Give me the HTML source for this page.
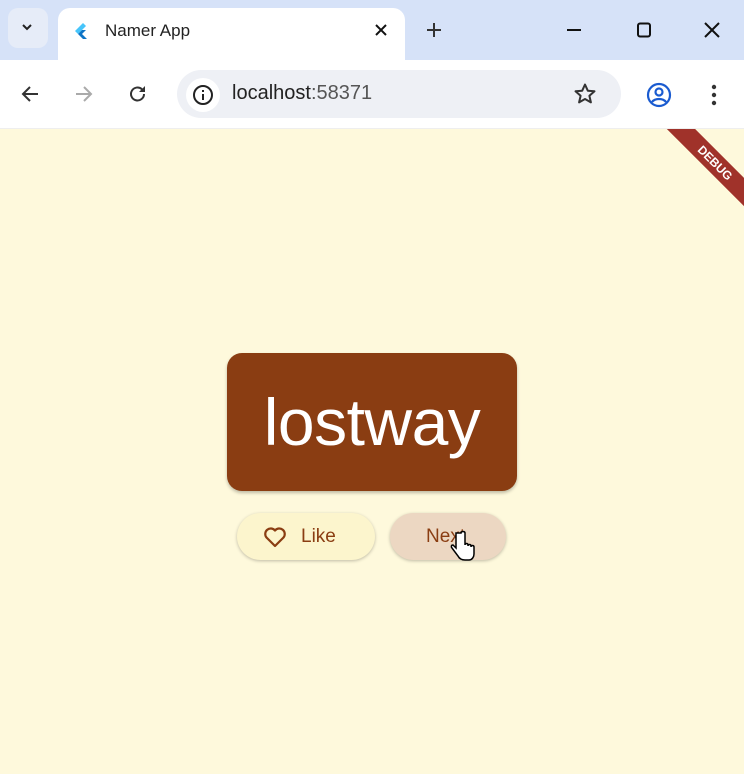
<!DOCTYPE html>
<html><head><meta charset="utf-8"><style>
*{margin:0;padding:0;box-sizing:border-box}
body{width:744px;height:774px;overflow:hidden;font-family:"Liberation Sans",sans-serif;background:#fef9dc;position:relative}
.tabbar{position:absolute;left:0;top:0;width:744px;height:60px;background:#d6e2f8}
.tab{position:absolute;left:58px;top:8px;width:347px;height:52px;background:#fff;border-radius:12px 12px 0 0}
.tb{position:absolute;left:0;top:60px;width:744px;height:69px;background:#fff;border-bottom:1px solid #eee}
.omni{position:absolute;left:177px;top:70px;width:444px;height:48px;background:#eef0f5;border-radius:24px}
.card{position:absolute;left:227px;top:353px;width:290px;height:138px;background:#8a3d12;border-radius:15px;box-shadow:0 2px 3px rgba(0,0,0,.25);color:#fff;font-size:66px;text-align:center;line-height:138px;letter-spacing:-0.5px}
.btn{position:absolute;top:513px;height:47px;border-radius:24px;color:#8a3d12;font-size:19px;line-height:47px;box-shadow:0 1px 3px rgba(0,0,0,.25)}
.clip{position:absolute;left:0;top:129px;width:744px;height:645px;overflow:hidden}
</style></head><body>
<div class="tabbar">
<div style="position:absolute;left:8px;top:8px;width:40px;height:40px;border-radius:10px;background:#e6ecf8"></div>
<svg style="position:absolute;left:20px;top:22px" width="14" height="10"><path d="M3 3l4 4 4-4" stroke="#222" stroke-width="2" fill="none"/></svg>
<div class="tab">
<svg style="position:absolute;left:15px;top:14px" width="16" height="20"><path d="M10 1L2 9l3 3 8-8z" fill="#47c5fb"/><path d="M5 12l5 5h4l-5-5 4-4H9z" fill="#0e75c6"/></svg>
<div style="position:absolute;left:47px;top:13px;font-size:17px;color:#222">Namer App</div>
<svg style="position:absolute;left:316px;top:15px" width="14" height="14"><path d="M2 2l10 10M12 2L2 12" stroke="#111" stroke-width="2"/></svg>
</div>
<svg style="position:absolute;left:426px;top:22px" width="16" height="16"><path d="M8 1v14M1 8h14" stroke="#333" stroke-width="2"/></svg>
<svg style="position:absolute;left:566px;top:22px" width="16" height="16"><path d="M1 8h14" stroke="#111" stroke-width="2"/></svg>
<svg style="position:absolute;left:636px;top:22px" width="16" height="16"><rect x="2" y="1.5" width="12" height="13" rx="2" stroke="#111" stroke-width="2" fill="none"/></svg>
<svg style="position:absolute;left:704px;top:22px" width="16" height="16"><path d="M1 1l14 14M15 1L1 15" stroke="#111" stroke-width="2"/></svg>
</div>
<div class="tb"></div>
<svg style="position:absolute;left:20px;top:84px" width="20" height="20"><path d="M18 10H3M10 3l-7 7 7 7" stroke="#333" stroke-width="2" fill="none"/></svg>
<svg style="position:absolute;left:74px;top:84px" width="20" height="20"><path d="M2 10h15M10 3l7 7-7 7" stroke="#aaa" stroke-width="2" fill="none"/></svg>
<svg style="position:absolute;left:128px;top:84px" width="20" height="20"><path d="M16 10a6.5 6.5 0 1 1-2-4.7" stroke="#333" stroke-width="2" fill="none"/><path d="M17 2v6h-6z" fill="#333"/></svg>
<div class="omni"></div>
<div style="position:absolute;left:186px;top:78px;width:34px;height:34px;border-radius:17px;background:#fff"></div>
<svg style="position:absolute;left:192px;top:84px" width="22" height="22"><circle cx="11" cy="11" r="9" stroke="#222" stroke-width="2" fill="none"/><path d="M11 10v6M11 6v2" stroke="#222" stroke-width="2"/></svg>
<div style="position:absolute;left:232px;top:82px;font-size:20px;color:#222">localhost<span style="color:#555">:58371</span></div>
<svg style="position:absolute;left:573px;top:82px" width="24" height="24"><path d="M12 2.5l2.8 6.2 6.7.6-5.1 4.5 1.5 6.6L12 17l-5.9 3.4 1.5-6.6-5.1-4.5 6.7-.6z" stroke="#333" stroke-width="2" fill="none" stroke-linejoin="round"/></svg>
<svg style="position:absolute;left:646px;top:82px" width="26" height="26"><circle cx="13" cy="13" r="11" stroke="#1a5bd0" stroke-width="2.2" fill="none"/><circle cx="13" cy="10" r="3.5" stroke="#1a5bd0" stroke-width="2.2" fill="none"/><path d="M6 20c3-4 11-4 14 0" stroke="#1a5bd0" stroke-width="2.2" fill="none"/></svg>
<svg style="position:absolute;left:710px;top:83px" width="8" height="24"><circle cx="4" cy="4" r="2.2" fill="#333"/><circle cx="4" cy="12" r="2.2" fill="#333"/><circle cx="4" cy="20" r="2.2" fill="#333"/></svg>
<div class="clip"><div style="position:absolute;left:640px;top:24px;width:150px;height:20px;background:#a0322a;transform:rotate(45deg);color:#fff;font-weight:bold;font-size:12px;text-align:center;line-height:20px">DEBUG</div></div>
<div class="card">lostway</div>
<div class="btn" style="left:237px;width:138px;background:#fcf5cd">
<svg style="position:absolute;left:26px;top:13px" width="24" height="22"><path d="M12 20L3.5 11.5A5 5 0 0 1 12 4.5a5 5 0 0 1 8.5 7z" stroke="#8a3d12" stroke-width="2.2" fill="none" stroke-linejoin="round"/></svg>
<span style="position:absolute;left:64px">Like</span></div>
<div class="btn" style="left:390px;width:116px;background:#ecd7c2"><span style="position:absolute;left:36px">Next</span></div>
<svg style="position:absolute;left:450px;top:530px" width="26" height="34"><path d="M6 3v15l-3-3c-2 0-2 2-1 3l6 8c1 2 3 4 7 4h4c3 0 5-3 5-6v-7c0-2-3-2-3 0v-1c0-2-3-2-3 0v-1c0-2-3-2-3 0V3c0-2-4-2-4 0z" fill="#fff" stroke="#000" stroke-width="1.5"/></svg>
</body></html>
